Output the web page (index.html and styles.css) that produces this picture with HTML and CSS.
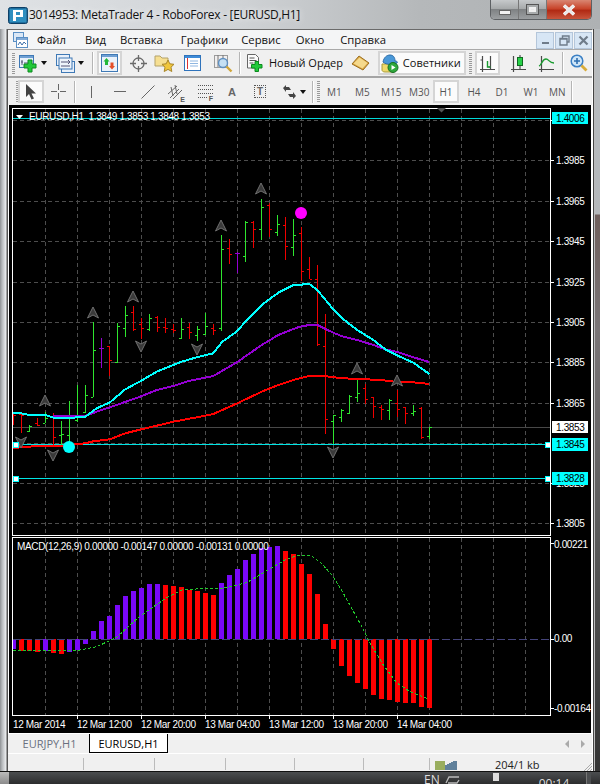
FILE: index.html
```html
<!DOCTYPE html>
<html lang="ru">
<head>
<meta charset="utf-8">
<title>MetaTrader 4</title>
<link rel="stylesheet" href="styles.css">
</head>
<body>
<div class="desktop">
  <header class="titlebar">
    <svg class="app-logo" width="20" height="17" viewBox="0 0 20 17"><rect x=".5" y=".5" width="19" height="16" rx="2" fill="#1f6f9f" stroke="#0d3f66"/><rect x="2" y="2" width="16" height="13" fill="#2f8fc0"/><path d="M5 3h10v7H8v4H5zM8 5v3h4V5z" fill="#fff" fill-rule="evenodd"/></svg>
    <span class="title-text">3014953: MetaTrader 4 - RoboForex - [EURUSD,H1]</span>
    <div class="win-buttons">
      <div class="win-btn win-min"><span class="glyph-min"></span></div>
      <div class="win-btn win-max"><span class="glyph-max"></span></div>
      <div class="win-btn win-close"><svg width="16" height="12" viewBox="0 0 16 12"><path d="M3 1.5l10 9M13 1.5l-10 9" stroke="#fff" stroke-width="3.4" fill="none"/><path d="M3 1.5l10 9M13 1.5l-10 9" stroke="#e8e8e8" stroke-width="2" fill="none"/></svg></div>
    </div>
  </header>

  <div class="middle">
    <div class="edge-left"></div>
    <main class="client">
      <nav class="menubar">
        <svg class="menu-icon" width="15" height="16" viewBox="0 0 15 16"><rect x=".5" y=".5" width="10" height="9" fill="#dbe8f6" stroke="#5a8fc4"/><rect x="3.5" y="5.5" width="11" height="10" fill="#fff" stroke="#5a8fc4"/><rect x="4" y="6" width="10" height="2" fill="#7fa9d6"/><path d="M5 13l2-3 2 3 2-3 2 2" stroke="#3c6ea8" fill="none"/></svg>
        <span class="menu-item m-file">Файл</span>
        <span class="menu-item m-view">Вид</span>
        <span class="menu-item m-ins">Вставка</span>
        <span class="menu-item m-chart">Графики</span>
        <span class="menu-item m-serv">Сервис</span>
        <span class="menu-item m-win">Окно</span>
        <span class="menu-item m-help">Справка</span>
        <div class="mdi-buttons">
          <div class="mdi-btn"><span class="mdi-min"></span></div>
          <div class="mdi-btn"><svg width="11" height="11" viewBox="0 0 11 11"><path d="M3.5 3V1h6.5v6H8M1 3.5h7v6.500H1zM1 4h7" stroke="#6f7c8a" fill="none" stroke-width="1.400"/></svg></div>
          <div class="mdi-btn"><svg width="11" height="11" viewBox="0 0 11 11"><path d="M1.500 1.500l8 8M9.500 1.500l-8 8" stroke="#6f7c8a" stroke-width="2.200" fill="none"/></svg></div>
        </div>
      </nav>

      <div class="toolbar tb-one">
        <span class="grip"></span>
        <span class="tool t-new"><svg width="19" height="19" viewBox="0 0 19 19"><rect x=".5" y="1.500" width="14" height="12" fill="#e8f0fa" stroke="#3f79b5"/><rect x="1" y="2" width="13" height="2" fill="#6fa0d4"/><path d="M3 6v5M2 8h2M5 9h6" stroke="#557" fill="none"/><path d="M9 6h4v4h4v4h-4v4H9v-4H5v-4h4z" fill="#22c93a" stroke="#0c8a1e"/></svg></span>
        <span class="caret c-a"></span>
        <span class="tool t-prof"><svg width="19" height="19" viewBox="0 0 19 19"><rect x=".5" y=".5" width="13" height="11" fill="#e8f0fa" stroke="#3f79b5"/><rect x="5.500" y="7.500" width="13" height="11" fill="#e8f0fa" stroke="#3f79b5"/><rect x="3" y="4" width="13" height="11" fill="#eef4fb" stroke="#3f79b5"/><path d="M5 8h9M12 6l2 2-2 2M5 12h9" stroke="#557" fill="none"/></svg></span>
        <span class="caret c-b"></span>
        <span class="tb-sep s-a"></span>
        <span class="tool-box box-mw"><svg width="17" height="18" viewBox="0 0 17 18"><rect x=".5" y=".5" width="16" height="17" fill="#eaf2fb" stroke="#3f79b5"/><rect x="1" y="1" width="15" height="2" fill="#6fa0d4"/><path d="M5.500 4l3 3.500H7V11H4V7.500H2.500z" fill="#22b83a"/><path d="M11 15.500l-3-3.500h1.500V8.500h3V12H14z" fill="#e4502a"/></svg></span>
        <span class="tool t-cross"><svg width="17" height="17" viewBox="0 0 17 17"><circle cx="8.500" cy="8.500" r="5.500" fill="none" stroke="#6a6a6a" stroke-width="1.300"/><path d="M8.500 0v6M8.500 11v6M0 8.500h6M11 8.500h6" stroke="#6a6a6a" stroke-width="1.300"/></svg></span>
        <span class="tool t-fold"><svg width="21" height="19" viewBox="0 0 21 19"><path d="M1 2h5l2 2h6v8H1z" fill="#f6df92" stroke="#b3a26a"/><path d="M14 6l1.800 3.800 4.200.5-3 2.900.8 4.300-3.800-2.100-3.800 2.100.8-4.300-3-2.900 4.200-.5z" fill="#f0c63c" stroke="#a8862a"/></svg></span>
        <span class="tool t-nav"><svg width="17" height="16" viewBox="0 0 17 16"><rect x=".5" y=".5" width="16" height="15" fill="#fff" stroke="#2f73bb" stroke-width="1"/><rect x="1" y="1" width="15" height="2" fill="#3f8cd8"/><rect x="3" y="3" width="1" height="11" fill="#d33"/><path d="M6 6h8M6 8.500h8M6 11h8" stroke="#8fb6e0"/></svg></span>
        <span class="tool t-test"><svg width="19" height="19" viewBox="0 0 19 19"><rect x=".5" y="1.500" width="13" height="12" fill="#f1efef" stroke="#9c9c9c"/><path d="M4 1v12M9 1v8" stroke="#777"/><circle cx="9" cy="9" r="4.500" fill="#c5e0f4" stroke="#5f8fc0" stroke-width="1.400"/><path d="M12.500 12.500l5 5" stroke="#d0a63a" stroke-width="2.400"/></svg></span>
        <span class="tb-sep s-b"></span>
        <span class="tool t-order"><svg width="17" height="18" viewBox="0 0 17 18"><path d="M.5.500h8l3 3V14H.5z" fill="#fbfbfb" stroke="#666"/><path d="M2.500 4h5M2.500 6.500h7M2.500 9h4" stroke="#555"/><path d="M8 7.500h3.500v3h3.500v3.500h-3.500v3.500H8V14H4.500v-3.500H8z" fill="#22c93a" stroke="#0c8a1e"/></svg><span class="tool-text">Новый Ордер</span></span>
        <span class="tool t-gold"><svg width="19" height="16" viewBox="0 0 19 16"><path d="M1 9l7-8 10 7-6 7z" fill="#d9a441" stroke="#9c6f1e"/><path d="M2.500 8.500l6-6 8 5.500-5 5.500z" fill="#f5d98c"/></svg></span>
        <span class="tool-box box-sov"><svg width="19" height="19" viewBox="0 0 19 19"><path d="M2 10h13v6c0 2-2 2-3 2H5c-2 0-3-1-3-2z" fill="#efd96a" stroke="#a99b3c"/><path d="M3 8c1-5 4-7 7-7s5 2 5 6c2 0 3 1 2 2-3 2-11 2-14-1z" fill="#4a98d8" stroke="#2f6ea8"/><circle cx="13" cy="13.500" r="5" fill="#2fa83c" stroke="#176f22"/><path d="M11.500 11l4 2.500-4 2.500z" fill="#fff"/></svg><span class="tool-text sov-text">Советники</span></span>
        <span class="grip g-b"></span>
        <span class="tool-box box-bars"><svg width="18" height="17" viewBox="0 0 18 17"><path d="M2 14.500h15M4.500 1v16M12.500 1v14M2.500 5h2M12.500 12h-2" stroke="#4a4a4a" fill="none" stroke-width="1.200"/><path d="M9.500 6v6h3" stroke="#1a9c30" fill="none" stroke-width="1.400"/></svg></span>
        <span class="tool t-cand"><svg width="18" height="17" viewBox="0 0 18 17"><path d="M2 14.500h15M4.500 1v16" stroke="#4a4a4a" fill="none" stroke-width="1.200"/><path d="M11 0v14" stroke="#333"/><rect x="8.500" y="2.500" width="5" height="8" fill="#28d048" stroke="#116a22"/></svg></span>
        <span class="tool t-line"><svg width="18" height="17" viewBox="0 0 18 17"><path d="M1 14.500h15M3.500 1v16" stroke="#4a4a4a" fill="none" stroke-width="1.200"/><path d="M1 11c3-1 3-7 7-7 3 0 3 4 8 4" stroke="#1a9c30" fill="none" stroke-width="1.400"/></svg></span>
        <span class="tb-sep s-c"></span>
        <span class="tool t-zoom"><svg width="18" height="18" viewBox="0 0 18 18"><circle cx="7" cy="7" r="5.800" fill="#cfe6f8" stroke="#3a7fc4" stroke-width="1.500"/><path d="M4 7h6M7 4v6" stroke="#2f6fb0" stroke-width="1.600"/><path d="M11.500 11.500l5 5" stroke="#d8ac3a" stroke-width="2.800"/></svg></span>
      </div>

      <div class="toolbar tb-two">
        <span class="grip g-c"></span>
        <span class="tool-box box-arrow"><svg width="12" height="16" viewBox="0 0 12 16"><path d="M1 0v13l3-3 2.500 5.500 2.500-1L6.500 9.500H11z" fill="#444"/></svg></span>
        <span class="tool t2-cross"><svg width="15" height="15" viewBox="0 0 15 15"><path d="M7.500 0v6M7.500 9v6M0 7.500h6M9 7.500h6" stroke="#666"/></svg></span>
        <span class="tb-sep s-d"></span>
        <span class="vline"></span>
        <span class="hline"></span>
        <span class="tool t2-trend"><svg width="14" height="14" viewBox="0 0 14 14"><path d="M.5 13.500l13-13" stroke="#666"/></svg></span>
        <span class="tool t2-chan"><svg width="16" height="16" viewBox="0 0 16 16"><path d="M0 10l9-8M2 14l9-9M5 15l9-9M3 3l2 9M7 1l2 9" stroke="#666" fill="none"/></svg><span class="mini-letter">E</span></span>
        <span class="tool t2-fib"><svg width="15" height="14" viewBox="0 0 15 14"><path d="M0 .5h15M0 4.500h15M0 8.500h15M0 12.500h10" stroke="#555" stroke-dasharray="1 1"/></svg><span class="mini-letter ml-f">F</span></span>
        <span class="letter-a">A</span>
        <span class="t-box">T</span>
        <span class="tool t2-mix"><svg width="15" height="14" viewBox="0 0 15 14"><path d="M1 3l3-3v2h3l2 3H4l0 2zM14 11l-3 3v-2H8L6 9h5V7z" fill="#444"/></svg></span>
        <span class="caret c-c"></span>
        <span class="tb-sep s-e"></span>
        <span class="grip g-d"></span>
        <span class="period p-m1">M1</span>
        <span class="period p-m5">M5</span>
        <span class="period p-m15">M15</span>
        <span class="period p-m30">M30</span>
        <span class="period period-on">H1</span>
        <span class="period p-h4">H4</span>
        <span class="period p-d1">D1</span>
        <span class="period p-w1">W1</span>
        <span class="period p-mn">MN</span>
        <span class="tb-sep s-f"></span>
      </div>

      <section class="chart-wrap">
        <svg id="chart" class="chart" width="582" height="628" viewBox="9 105 582 628">
          <g id="plot"></g>
          <rect class="frame" x="12.500" y="108.500" width="538" height="427"/>
          <rect class="frame" x="12.500" y="537.500" width="538" height="178"/>
          <path d="M437 108h9l-4.500 4.500z" fill="#555"/>

          <g class="label">
            <text x="29" y="120">EURUSD,H1&#160;&#160;1.3849 1.3853 1.3848 1.3853</text>
            <text x="17" y="550">MACD(12,26,9) 0.00000 -0.00147 0.00000 -0.00131 0.00000</text>
            <text x="556" y="164">1.3985</text>
            <text x="556" y="205">1.3965</text>
            <text x="556" y="245">1.3945</text>
            <text x="556" y="286">1.3925</text>
            <text x="556" y="326">1.3905</text>
            <text x="556" y="366">1.3885</text>
            <text x="556" y="407">1.3865</text>
            <text x="556" y="487">1.3825</text>
            <text x="556" y="527">1.3805</text>
            <text x="554" y="548">0.00221</text>
            <text x="554" y="642">0.00</text>
            <text x="554" y="712">-0.00164</text>
            <text x="13" y="728">12 Mar 2014</text>
            <text x="77" y="728">12 Mar 12:00</text>
            <text x="141" y="728">12 Mar 20:00</text>
            <text x="205" y="728">13 Mar 04:00</text>
            <text x="269" y="728">13 Mar 12:00</text>
            <text x="333" y="728">13 Mar 20:00</text>
            <text x="397" y="728">14 Mar 04:00</text>
          </g>
          <rect x="552" y="112" width="36" height="12" fill="#0ff"/>
          <rect x="552" y="421" width="36" height="12" fill="#fff"/>
          <rect x="552" y="438" width="36" height="13" fill="#0ff"/>
          <rect x="552" y="472" width="36" height="13" fill="#0ff"/>
          <g class="label label-dark">
            <text x="556" y="122">1.4006</text>
            <text x="556" y="431">1.3853</text>
            <text x="556" y="448">1.3845</text>
            <text x="556" y="482">1.3828</text>
          </g>
        </svg>
      </section>

      <div class="tabbar">
        <span class="tab">EURJPY,H1</span>
        <span class="tab tab-on">EURUSD,H1</span>
        <span class="tab-nav"><i class="tri-l"></i><i class="tri-r"></i></span>
      </div>

      <footer class="statusbar">
        <span class="st st-a"></span><span class="st st-b"></span><span class="st st-c"></span><span class="st st-d"></span><span class="st st-e"></span><span class="st st-f"></span>
        <svg class="st-icon" width="23" height="9" viewBox="0 0 23 9"><path d="M1 0v9M3 0v9M5 0v9M7 0v9M9 0v9" stroke="#6b8a10" stroke-width="1.300"/><path d="M11 4v5M13 3v6M15 2v7M17 1v8M19 0v9M21 0v9" stroke="#14466e" stroke-width="1.300"/></svg>
        <span class="st-text">204/1 kb</span>
        <svg class="grip-corner" width="9" height="9" viewBox="0 0 9 9"><path d="M9 1L1 9M9 4L4 9M9 7L7 9" stroke="#aaa"/></svg>
      </footer>
    </main>
    <div class="edge-right"></div>
  </div>

  <div class="taskbar">
    <span class="start-stub"></span>
    <span class="tray-en">EN</span>
    <svg class="tray-net" width="15" height="10" viewBox="0 0 15 10"><path d="M1 9l3-6h10M3 9h9l2-3" stroke="#bbb" fill="none" stroke-width="1.300"/></svg>
    <span class="tray-pc"></span>
    <span class="tray-clock">00:14</span>
    <span class="tray-end"></span>
  </div>
</div>
<script src="chart.js"></script>
</body>
</html>
```

FILE: styles.css
```css
* { box-sizing: border-box; }
html, body { margin: 0; padding: 0; }
body { width: 600px; height: 784px; overflow: hidden; background: #333; font-family: "Open Sans", "Noto Sans", sans-serif; }
.desktop { width: 600px; height: 784px; display: flex; flex-direction: column; overflow: hidden; }

/* title bar */
.titlebar { height: 29px; flex: none; display: flex; align-items: flex-start; background: linear-gradient(90deg, #dfe2e5 0, #cfd2d5 40%, #b5b8ba 70%, #aeb1b3 100%); }
.app-logo { margin: 7px 0 0 8px; flex: none; }
.title-text { margin: 7px 0 0 1px; font: 12px/15px "Open Sans", sans-serif; color: #111; white-space: nowrap; text-shadow: 0 0 6px #fff; width: 460px; flex: none; letter-spacing: -.28px; }
.win-buttons { display: flex; height: 20px; width: 102px; flex: none; position: absolute; left: 490px; top: 0; border: 1px solid #5d6063; border-top: 0; border-radius: 0 0 5px 5px; overflow: hidden; }
.win-btn { height: 19px; display: flex; align-items: center; justify-content: center; border-right: 1px solid #777; background: linear-gradient(180deg, #c6c9cb 0, #a7aaab 45%, #7f8284 50%, #9c9fa1 100%); }
.win-min { width: 28px; }
.win-max { width: 28px; }
.win-close { flex: 1; border: 0; background: linear-gradient(180deg, #d98672 0, #c8452b 45%, #b12a14 55%, #c8553c 100%); }
.glyph-min { width: 12px; height: 5px; margin-top: 5px; background: #f2f2f2; border: 1px solid #666; }
.glyph-max { width: 13px; height: 11px; border: 1px solid #555; background: #e8e8e8; box-shadow: inset 0 0 0 2px #a8abac, inset 0 0 0 4px #f0f0f0; }

/* middle */
.middle { flex: 1; display: flex; min-height: 0; }
.edge-left { width: 7px; flex: none; background: linear-gradient(90deg, #8f9295 0, #b6b9bc 30%, #e6e8ea 80%, #777 100%); }
.edge-right { width: 7px; flex: none; background: linear-gradient(180deg, #b8bcbf 0, #b4b7ba 185px, #6f5f5c 186px, #7a7577 300px, #5a5a5a 500px, #333 742px); border-left: 1px solid #444; box-shadow: inset 1px 0 0 #bbb; }
.client { width: 586px; flex: none; display: flex; flex-direction: column; background: #f0f0f0; border-left: 1px solid #555; border-right: 1px solid #fff; border-top: 1px solid #6a6a6a; }

/* menu */
.menubar { height: 20px; flex: none; position: relative; display: flex; align-items: center; font-size: 11.300px; color: #111; background: #f4f5f6; border-bottom: 1px solid #a9a9a9; }
.menu-icon { flex: none; margin-left: 5px; }
.menu-item { flex: none; line-height: 16px; white-space: nowrap; }
.m-file { margin-left: 9px; }
.m-view { margin-left: 19px; }
.m-ins { margin-left: 14px; }
.m-chart { margin-left: 18px; }
.m-serv { margin-left: 13px; }
.m-win { margin-left: 15px; }
.m-help { margin-left: 16px; }
.mdi-buttons { position: absolute; right: 0; top: 2px; display: flex; gap: 1px; }
.mdi-btn { width: 18px; height: 17px; background: #d7e6f5; border: 1px solid #b4c6da; display: flex; align-items: center; justify-content: center; }
.mdi-min { width: 7px; height: 2px; margin-top: 5px; background: #6f7c8a; }

/* toolbars */
.toolbar { flex: none; display: flex; align-items: center; border-bottom: 2px solid #a4a4a4; }
.tb-one { height: 28px; }
.tb-two { height: 27px; border-bottom: 0; }
.grip { width: 3px; height: 21px; flex: none; margin-left: 4px; background: repeating-linear-gradient(180deg, #9a9a9a 0 1px, #f0f0f0 1px 2px); }
.tool { flex: none; display: flex; align-items: center; position: relative; }
.tool-box { flex: none; display: flex; align-items: center; justify-content: center; border: 2px solid #d5d5d5; background: #fbfbfb; }
.tool-text { font-size: 11px; color: #111; margin-left: 5px; white-space: nowrap; line-height: 16px; }
.caret { flex: none; width: 0; height: 0; border: 3.500px solid transparent; border-top: 4px solid #111; border-bottom: 0; }
.tb-sep { flex: none; width: 2px; height: 22px; background: #b5b5b5; border-right: 1px solid #fff; }

.t-new { margin-left: 4px; }
.c-a { margin-left: 3px; }
.t-prof { margin-left: 9px; }
.c-b { margin-left: 3px; }
.s-a { margin-left: 8px; }
.box-mw { width: 25px; height: 24px; margin-left: 3px; }
.t-cross { margin-left: 8px; }
.t-fold { margin-left: 7px; }
.t-nav { margin-left: 9px; }
.t-test { margin-left: 13px; }
.s-b { margin-left: 6px; }
.t-order { margin-left: 6px; }
.t-gold { margin-left: 8px; }
.box-sov { width: 88px; height: 24px; margin-left: 8px; justify-content: flex-start; padding-left: 0; }
.sov-text { margin-left: 4px; }
.g-b { margin-left: 3px; }
.box-bars { width: 25px; height: 24px; margin-left: 3px; }
.t-cand { margin-left: 9px; }
.t-line { margin-left: 11px; }
.s-c { margin-left: 6px; }
.t-zoom { margin-left: 6px; }

.g-c { margin-left: 8px; }
.box-arrow { width: 26px; height: 23px; margin-left: -1px; }
.t2-cross { margin-left: 7px; }
.s-d { margin-left: 8px; }
.vline { flex: none; width: 1px; height: 12px; background: #666; margin-left: 15px; }
.hline { flex: none; width: 12px; height: 1px; background: #666; margin-left: 22px; }
.t2-trend { margin-left: 15px; }
.t2-chan { margin-left: 13px; }
.t2-fib { margin-left: 14px; }
.mini-letter { position: absolute; right: -1px; bottom: -4px; font: bold 7px/8px "Liberation Sans", sans-serif; color: #555; }
.ml-f { right: 0; }
.letter-a { flex: none; margin-left: 15px; font: bold 11px/12px "Liberation Sans", sans-serif; color: #666; width: 9px; }
.t-box { flex: none; margin-left: 17px; width: 12px; height: 13px; border: 1px dotted #555; font: bold 10px/11px "Liberation Sans", sans-serif; color: #666; text-align: center; }
.t2-mix { margin-left: 16px; }
.c-c { margin-left: 3px; }
.s-e { margin-left: 6px; }
.g-d { margin-left: 3px; }
.period { flex: none; text-align: center; font: 10px/12px "Open Sans", sans-serif; color: #555; }
.p-m1 { width: 14px; margin-left: 7px; }
.p-m5 { width: 14px; margin-left: 14px; }
.p-m15 { width: 18px; margin-left: 12px; }
.p-m30 { width: 18px; margin-left: 10px; }
.period-on { width: 26px; height: 23px; margin-left: 6px; line-height: 20px; border: 2px solid #d5d5d5; background: #fbfbfb; }
.p-h4 { width: 14px; margin-left: 8px; }
.p-d1 { width: 14px; margin-left: 14px; }
.p-w1 { width: 16px; margin-left: 14px; }
.p-mn { width: 16px; margin-left: 10px; }
.s-f { margin-left: 6px; }

/* chart */
.chart-wrap { height: 629px; flex: none; padding: 0 0 0 1px; background: #fff; }
.chart { display: block; background: #000; }
.frame { fill: none; stroke: #fff; stroke-width: 1; shape-rendering: crispEdges; }
.label text { font: 10px "Liberation Sans", sans-serif; letter-spacing: -.35px; fill: #fff; }
.label-dark text { fill: #000; }

/* tabs */
.tabbar { height: 20px; flex: none; display: flex; align-items: stretch; background: #f0f0f0; border-bottom: 1px solid #fff; padding-left: 2px; }
.tab { width: 79px; flex: none; text-align: center; font: 11px/19px "Open Sans", sans-serif; color: #6a7080; }
.tab-on { color: #000; background: #fff; border-right: 1px solid #000; border-left: 1px solid #000; border-bottom: 1px solid #000; }
.tab-nav { margin-left: auto; display: flex; align-items: center; gap: 12px; padding-right: 7px; }
.tri-l, .tri-r { display: block; width: 0; height: 0; border: 4px solid transparent; }
.tri-l { border-right: 4px solid #aaa; border-left: 0; }
.tri-r { border-left: 4px solid #aaa; border-right: 0; }

/* status */
.statusbar { flex: 1; min-height: 0; position: relative; display: flex; align-items: flex-start; overflow: hidden; background: #f0f0f0; }
.st { flex: none; width: 71px; height: 12px; margin-top: 4px; border-right: 1px solid #bbb; }
.st-a { width: 76px; }
.st-d { width: 69px; }
.st-e { width: 69px; }
.st-f { width: 66px; }
.st-icon { flex: none; margin: 7px 0 0 5px; }
.st-text { flex: none; margin: 4px 0 0 37px; font: 11px/14px "Open Sans", sans-serif; color: #222; white-space: nowrap; }
.grip-corner { position: absolute; right: 0; bottom: 0; }

/* taskbar */
.taskbar { height: 13px; flex: none; display: flex; align-items: flex-start; overflow: hidden; background: linear-gradient(180deg, #4b4d4f 0, #2c2d2e 100%); border-top: 1px solid #111; color: #ddd; }
.start-stub { flex: none; width: 9px; height: 13px; background: linear-gradient(180deg, #bbb, #888); }
.tray-en { flex: none; margin: 1px 0 0 415px; font: 12px/14px "Open Sans", sans-serif; }
.tray-net { flex: none; margin: 2px 0 0 5px; }
.tray-pc { flex: none; width: 6px; height: 8px; margin: 1px 0 0 33px; background: #ddd; }
.tray-clock { flex: none; margin: 5px 0 0 40px; font: 12px/14px "Open Sans", sans-serif; }
.tray-end { flex: none; width: 5px; height: 13px; margin-left: 17px; background: #4c4e50; border-left: 1px solid #777; }
```

FILE: chart.js
```js
(function () {
  var NS = 'http://www.w3.org/2000/svg';
  var plot = document.getElementById('plot');

  function add(tag, attrs) {
    var el = document.createElementNS(NS, tag);
    for (var k in attrs) el.setAttribute(k, attrs[k]);
    plot.appendChild(el);
    return el;
  }
  function py(z) { return Math.round(180 + z / 3); }
  function my(z) { return Math.round(530 + z / 3); }

  // grid
  var g = '';
  for (var x = 45; x < 550; x += 32) g += 'M' + (x + .5) + ' 109V535M' + (x + .5) + ' 538V715';
  [120, 160, 201, 241, 282, 322, 362, 403, 443, 483, 523].forEach(function (y) {
    g += 'M13 ' + (y + .5) + 'H550';
  });
  add('path', { d: g, stroke: '#4d4d4d', 'stroke-dasharray': '4 3', fill: 'none', 'shape-rendering': 'crispEdges' });

  // axis ticks
  var t = '';
  [120, 160, 201, 241, 282, 322, 362, 403, 483, 523, 543, 639, 708].forEach(function (y) {
    t += 'M551 ' + (y + .5) + 'h3';
  });
  for (x = 77; x < 400; x += 64) t += 'M' + (x + .5) + ' 716v3';
  add('path', { d: t, stroke: '#fff', fill: 'none', 'shape-rendering': 'crispEdges' });

  // price lines
  function hline(y, color, width) {
    add('path', { d: 'M13 ' + (y + .5) + 'H550', stroke: color, 'stroke-width': width || 1, 'shape-rendering': 'crispEdges' });
  }
  hline(427, '#484848');
  hline(118, '#00d8d8');
  hline(444, '#00e5e5');
  hline(478, '#00e5e5');

  // bars: [colour, high, low, open, close] in zoom-space y
  var G = '#2ee62e', R = '#f00000', P = '#9400d3';
  var bars = [
    [R,695,735,700,705],[R,700,760,703,705],[G,735,755,752,737],[R,715,738,730,736],[G,695,730,730,715],
    [R,700,800,712,772],[G,723,795,765,762],[G,663,795,765,705],[G,615,725,720,712],[G,615,700,695,645],
    [G,427,652,652,510],[P,475,565,505,505],[R,498,587,498,540],[G,428,548,547,437],[G,378,470,445,405],
    [R,378,452,397,447],[R,415,477,433,443],[G,403,453,448,415],[R,408,457,410,440],[R,415,458,442,445],
    [R,432,458,447,450],[G,414,477,475,448],[R,428,477,442,457],[G,438,483,465,447],[G,400,465,463,437],
    [R,432,465,445,450],[G,165,453,445,207],[R,178,252,203,222],[P,215,278,218,218],[G,123,245,227,125],
    [R,123,203,127,147],[G,57,180,147,80],[R,70,170,75,148],[G,105,168,155,132],[R,110,240,135,197],
    [G,117,227,202,165],[R,142,302,160,273],[R,232,298,268,298],[R,255,498,298,493],[R,403,762,498,718],
    [G,705,792,722,705],[G,688,725,712,690],[G,645,702,700,648],[G,597,665,650,640],[R,613,672,625,658],
    [R,652,714,652,677],[R,675,720,680,688],[G,658,720,690,660],[R,630,710,668,688],[R,682,732,682,698],
    [G,675,708,700,692],[R,682,778,684,772],[G,742,778,767,742]
  ];
  var paths = {};
  bars.forEach(function (b, i) {
    var xc = 13 + 8 * i;
    var d = 'M' + (xc + .5) + ' ' + py(b[1]) + 'V' + py(b[2]);
    if (i > 0) d += 'M' + (xc - 2) + ' ' + (py(b[3]) + .5) + 'h2';
    d += 'M' + (xc + 1) + ' ' + (py(b[4]) + .5) + 'h2';
    paths[b[0]] = (paths[b[0]] || '') + d;
  });
  for (var c in paths) add('path', { d: paths[c], stroke: c, fill: 'none', 'shape-rendering': 'crispEdges' });

  // moving averages: left-half points then right-half points, both in zoom space
  function poly(left, right, color) {
    var pts = [];
    left.forEach(function (p) { pts.push((p[0] / 3).toFixed(1) + ',' + (180 + p[1] / 3).toFixed(1)); });
    right.forEach(function (p) { pts.push((300 + p[0] / 3).toFixed(1) + ',' + (180 + p[1] / 3).toFixed(1)); });
    add('polyline', { points: pts.join(' '), fill: 'none', stroke: color, 'stroke-width': 2, 'shape-rendering': 'crispEdges' });
  }
  poly([[40,804],[64,802],[112,798],[190,797],[256,790],[280,784],[330,778],[376,760],[424,748],[470,737],[520,725],[600,710],[640,702],[712,670],[785,635],[835,615],[880,600]],
       [[0,595],[28,588],[76,588],[100,592],[150,596],[196,598],[244,600],[292,606],[340,607],[388,612]], '#ff0000');
  poly([[160,708],[256,708],[290,695],[330,682],[420,650],[470,630],[520,618],[565,603],[640,588],[712,546],[785,495],[835,465],[880,447]],
       [[0,440],[28,435],[52,435],[100,458],[130,470],[172,480],[220,495],[256,508],[300,518],[340,532],[388,546]], '#9400d3');
  poly([[40,698],[64,700],[88,705],[136,705],[160,713],[208,714],[256,710],[290,685],[330,667],[376,628],[424,602],[470,575],[520,555],[545,545],[590,532],[640,520],[665,487],[712,453],[740,420],[785,375],[835,338],[880,315]],
       [[0,314],[28,312],[52,330],[100,388],[130,418],[172,450],[220,480],[256,508],[300,530],[340,548],[388,582]], '#00ffff');

  // arrows
  function arrow(x, y, up) {
    var s = up ? 1 : -1;
    add('path', {
      d: 'M' + x + ' ' + (y - 6 * s) + 'L' + (x + 5.5) + ' ' + (y + 5 * s) + 'L' + x + ' ' + (y + 2 * s) + 'L' + (x - 5.5) + ' ' + (y + 5 * s) + 'Z',
      fill: '#3a3a3a', stroke: '#6f6f6f', 'stroke-width': 1
    });
  }
  [[45,401],[93,313],[133,297],[221,226],[261,189],[357,369],[397,381]].forEach(function (p) { arrow(p[0], p[1], true); });
  [[21,442],[53,455],[141,346],[197,349],[333,452]].forEach(function (p) { arrow(p[0], p[1], false); });

  // markers
  add('circle', { cx: 69, cy: 447, r: 6, fill: '#00ffff' });
  add('circle', { cx: 301, cy: 213, r: 6, fill: '#ff00ff' });
  [[13,442],[545,442],[13,476],[545,476]].forEach(function (p) {
    add('rect', { x: p[0], y: p[1], width: 5, height: 5, fill: '#fff', stroke: '#0ff', 'shape-rendering': 'crispEdges' });
  });
  add('path', { d: 'M16 115h7l-3.500 4z', fill: '#fff' });

  // MACD histogram: [colour, edge] in zoom-space y, zero at 328
  var V = '#7a08f8', H = '#ff0000';
  var macd = [
    [V,358],[H,362],[H,364],[H,366],[V,362],[H,369],[H,372],[V,366],[V,360],[V,342],
    [V,303],[V,273],[V,258],[V,225],[V,198],[V,183],[V,174],[V,162],[V,162],[H,165],
    [H,168],[H,171],[H,180],[H,183],[H,189],[H,195],[V,159],[V,135],[V,117],[V,90],
    [V,72],[V,54],[V,51],[V,48],[H,63],[H,72],[H,102],[H,132],[H,192],[H,282],
    [H,357],[H,408],[H,438],[H,459],[H,477],[H,495],[H,507],[H,510],[H,516],[H,519],
    [H,519],[H,531],[H,534]
  ];
  macd.forEach(function (m, i) {
    var xc = 13 + 8 * i, e = my(m[1]), z = 639;
    var left = i === 0 ? 13 : xc - 2, w = i === 0 ? 3 : 5;
    add('rect', { x: left, y: Math.min(e, z), width: w, height: Math.abs(e - z), fill: m[0], 'shape-rendering': 'crispEdges' });
  });
  add('path', { d: 'M13 639.5H550', stroke: '#44447a', 'stroke-dasharray': '8 3', 'shape-rendering': 'crispEdges' });

  // signal line
  var sig = [];
  [[39,360],[230,362],[290,350],[350,322],[420,258],[500,203],[545,180],[620,175],[670,175],[740,158],[800,122],[855,90],[890,77]].forEach(function (p) {
    sig.push((p[0] / 3).toFixed(1) + ',' + (530 + p[1] / 3).toFixed(1));
  });
  [[0,76],[30,76],[60,95],[100,140],[130,190],[180,280],[210,340],[250,405],[290,458],[330,485],[388,508]].forEach(function (p) {
    sig.push((300 + p[0] / 3).toFixed(1) + ',' + (530 + p[1] / 3).toFixed(1));
  });
  add('polyline', { points: sig.join(' '), fill: 'none', stroke: '#22c82c', 'stroke-dasharray': '3 2', 'shape-rendering': 'crispEdges' });
})();
```
